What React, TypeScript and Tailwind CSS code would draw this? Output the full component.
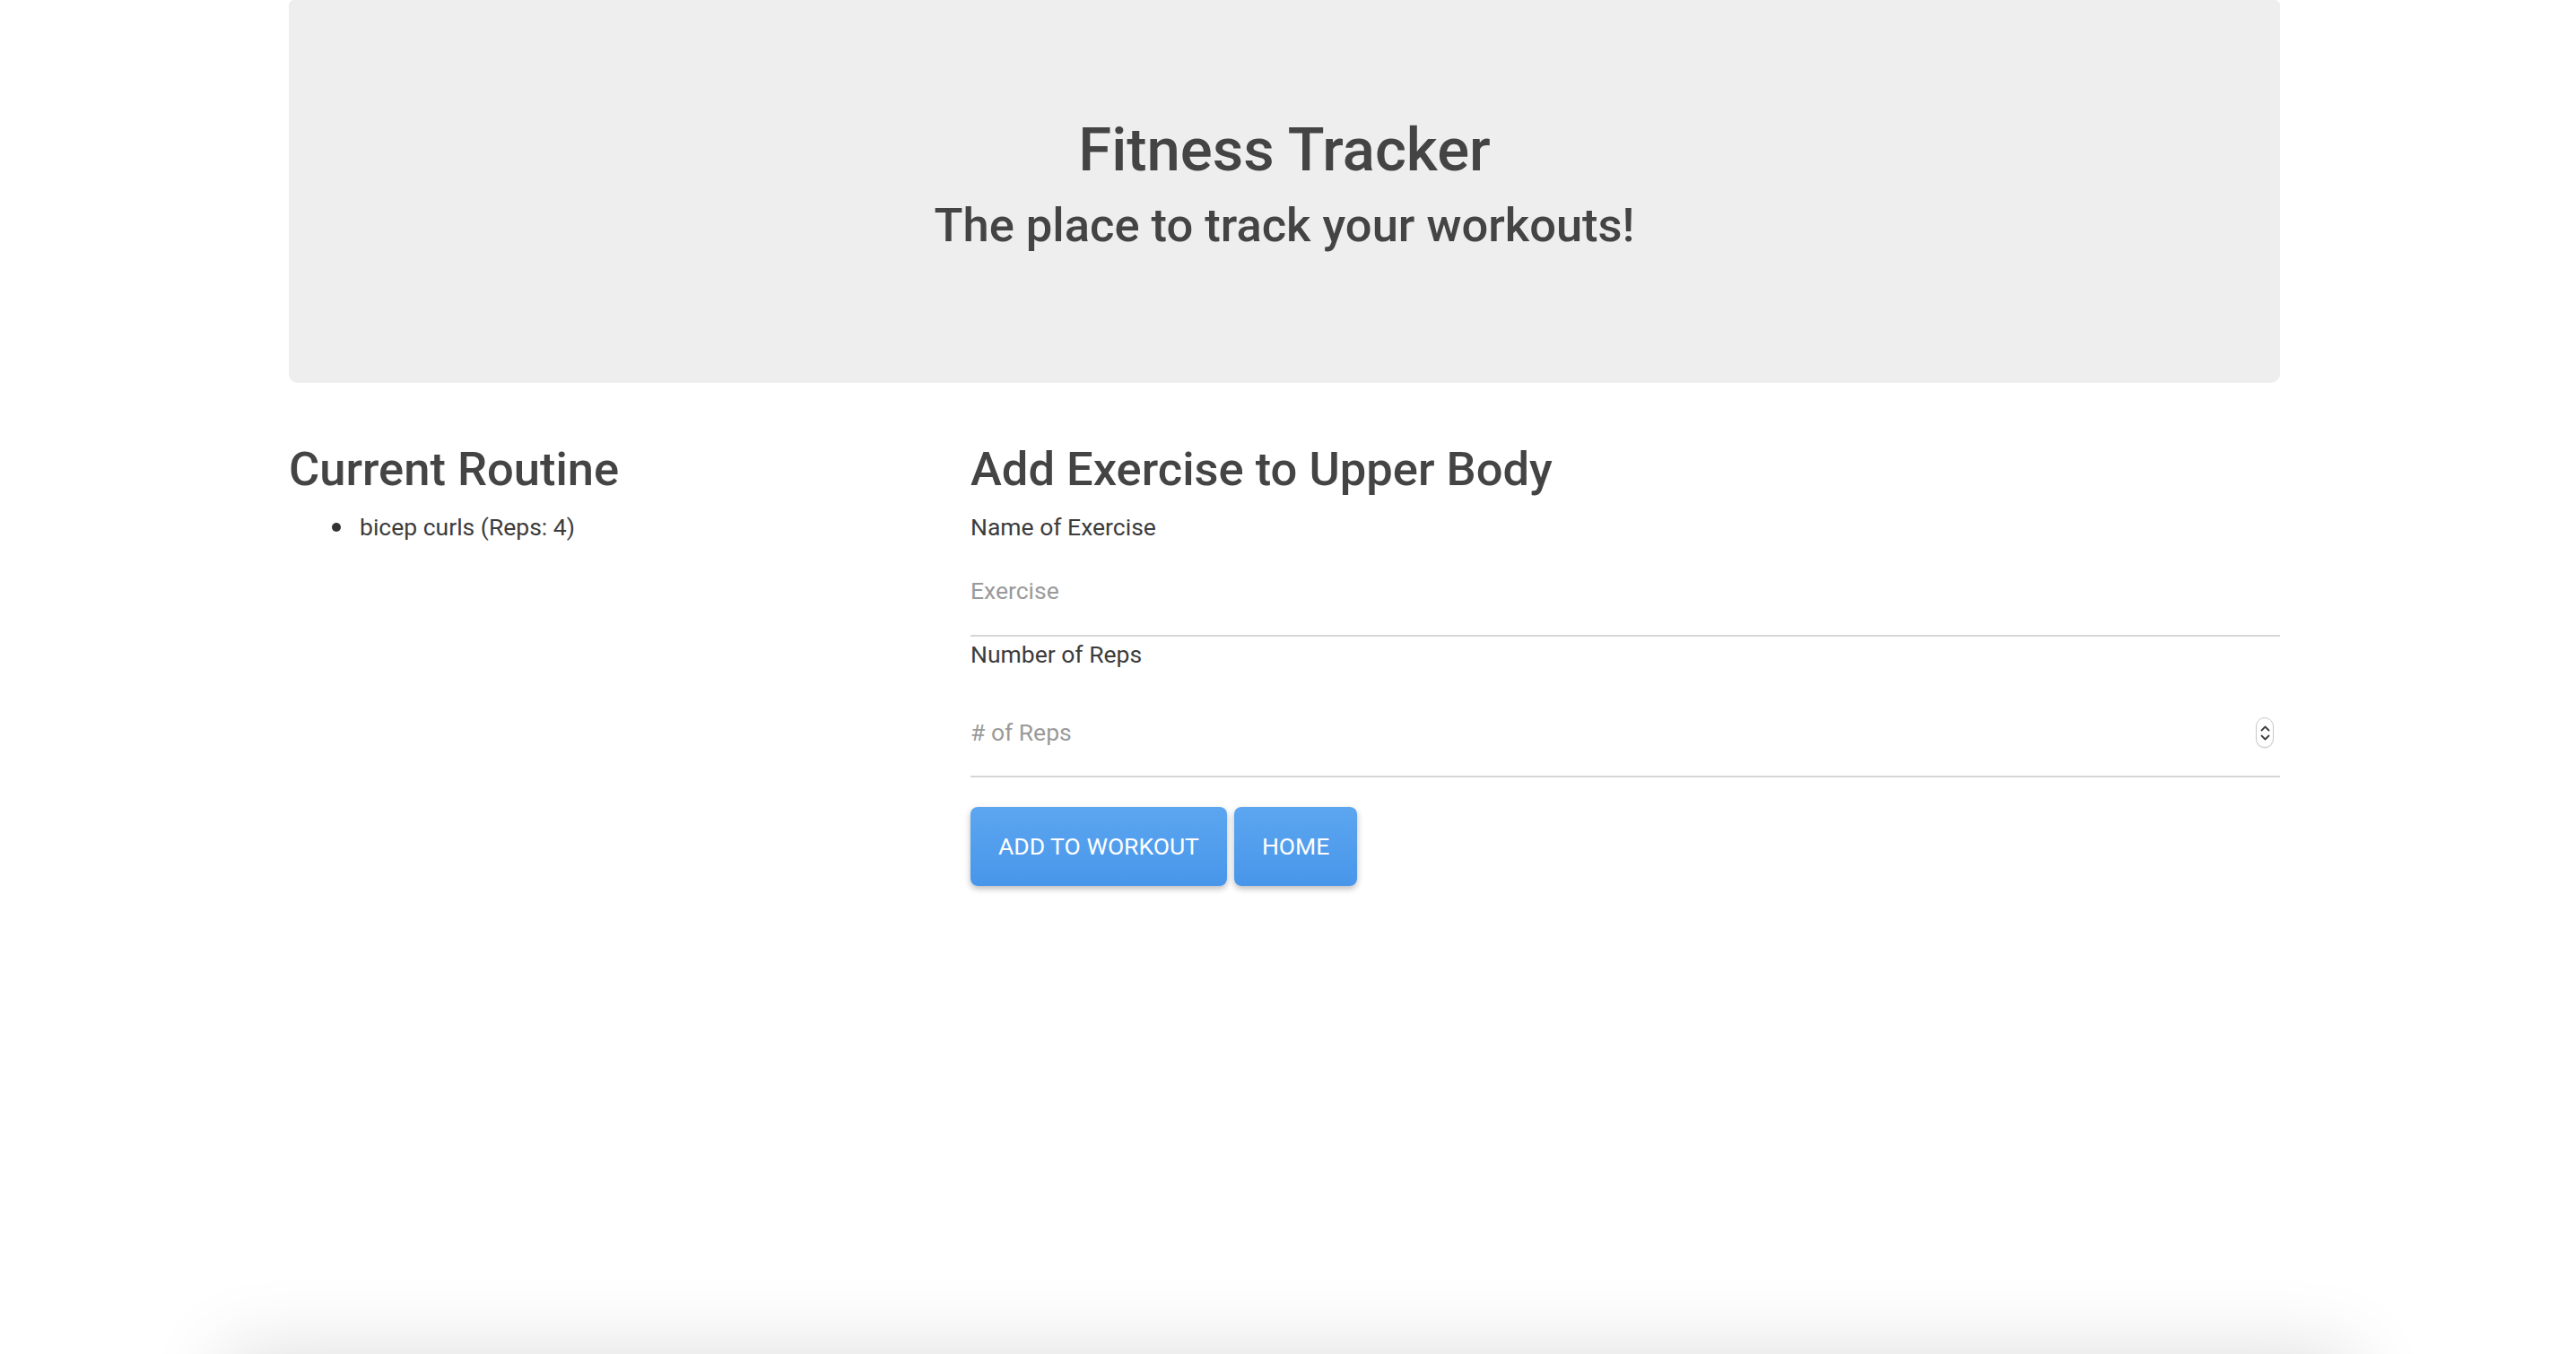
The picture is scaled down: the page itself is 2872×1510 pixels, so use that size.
import React from 'react';

const font = { fontFamily: 'Roboto, "Noto Sans", Arial, sans-serif' };

function Spinner() {
  return (
    <div className="absolute right-[7px] top-1/2 -translate-y-1/2 flex h-[34px] w-[20px] flex-col items-center justify-center gap-[3px] rounded-full border border-[#c9c9c9] bg-white shadow-[0_1px_1px_rgba(0,0,0,0.08)]">
      <svg width="11" height="7" viewBox="0 0 11 7" fill="none">
        <path d="M1.5 5.5 5.5 1.5 9.5 5.5" stroke="#3d3d3d" strokeWidth="1.8" strokeLinecap="round" strokeLinejoin="round" />
      </svg>
      <svg width="11" height="7" viewBox="0 0 11 7" fill="none">
        <path d="M1.5 1.5 5.5 5.5 9.5 1.5" stroke="#3d3d3d" strokeWidth="1.8" strokeLinecap="round" strokeLinejoin="round" />
      </svg>
    </div>
  );
}

const btn =
  'h-[88px] rounded-[8px] bg-gradient-to-b from-[#5ca6f0] to-[#4896ea] px-[31px] text-[26.5px] uppercase text-white shadow-[0_3px_7px_rgba(0,0,0,0.28)]';

export default function App() {
  return (
    <div className="relative h-[1510px] overflow-hidden bg-white text-[#444]" style={font}>
      <div className="ml-[322px] w-[2220px]">
        {/* header */}
        <div className="flex h-[427px] flex-col items-center rounded-b-[10px] rounded-t-[6px] bg-[#eeeeee] pt-[127px]">
          <h1 className="text-[67px] font-medium leading-[80px]">Fitness Tracker</h1>
          <h3 className="mt-[13px] text-[52.5px] font-medium leading-[62px]">The place to track your workouts!</h3>
        </div>

        <div className="mt-[64px] grid grid-cols-[730px_1fr] gap-[30px]">
          {/* routine */}
          <div>
            <h2 className="text-[52.5px] font-medium leading-[64px]">Current Routine</h2>
            <ul className="mt-[13px] pl-[48px] text-[26.5px] leading-[40px] text-[#3c3c3c]">
              <li className="flex items-center gap-[21px]">
                <span className="h-[10px] w-[10px] shrink-0 rounded-full bg-[#333]" />
                <span>bicep curls (Reps: 4)</span>
              </li>
            </ul>
          </div>

          {/* form */}
          <div>
            <h2 className="text-[52.5px] font-medium leading-[64px]">Add Exercise to Upper Body</h2>
            <form className="mt-[13px] flex flex-col text-[26.5px] text-[#3c3c3c]">
              <label className="leading-[40px]">Name of Exercise</label>
              <input
                type="text"
                placeholder="Exercise"
                className="h-[102px] w-full border-b-2 border-[#d6d6d6] bg-transparent text-[26.5px] outline-none placeholder:text-[#9a9a9a]"
                style={font}
              />
              <label className="leading-[40px]">Number of Reps</label>
              <div className="relative mt-[17px]">
                <input
                  type="text"
                  placeholder="# of Reps"
                  className="h-[100px] w-full border-b-2 border-[#d6d6d6] bg-transparent text-[26.5px] outline-none placeholder:text-[#9a9a9a]"
                  style={font}
                />
                <Spinner />
              </div>
              <div className="mt-[33px] flex gap-[8px]">
                <button type="button" className={btn} style={font}>
                  Add to Workout
                </button>
                <button type="button" className={btn} style={font}>
                  Home
                </button>
              </div>
            </form>
          </div>
        </div>
      </div>

      {/* footer peeking below the fold */}
      <div className="absolute left-[250px] right-[250px] top-[1510px] h-[200px] bg-white shadow-[0_0_90px_rgba(0,0,0,0.14)]" />
    </div>
  );
}
